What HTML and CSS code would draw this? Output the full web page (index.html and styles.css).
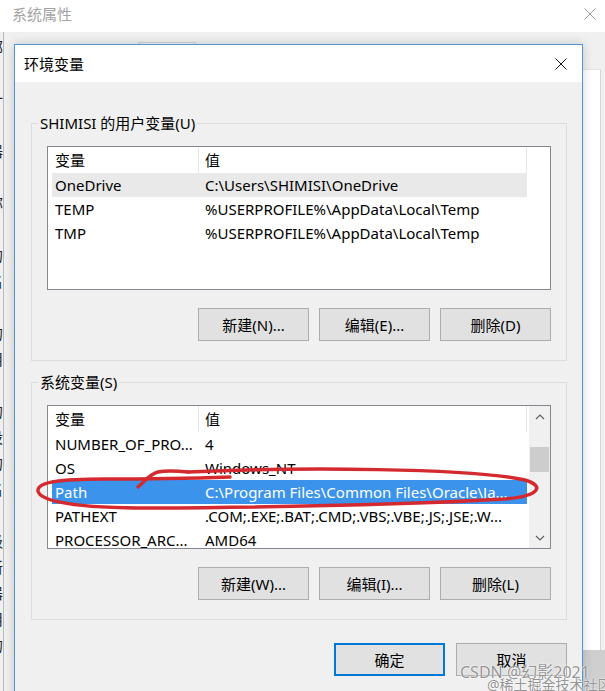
FILE: index.html
```html
<!DOCTYPE html>
<html lang="zh-CN">
<head>
<meta charset="utf-8">
<title>环境变量</title>
<link rel="stylesheet" href="styles.css">
</head>
<body>
<div class="bgwin">
  <div class="bg-titlebar">
    <span class="bg-title">系统属性</span>
    <svg class="bg-close" width="12" height="12" viewBox="0 0 12 12"><path d="M0.5 0.5L11.5 11.5M11.5 0.5L0.5 11.5" stroke="#9a9a9a" stroke-width="1" fill="none"/></svg>
  </div>
  <div class="bg-body">
    <div class="bg-left">
      <div class="bg-left-text">部<br>\<br>计<br>s<br>器<br>d<br>称<br>\<br>的<br>名<br>s<br>的<br>用<br>、<br>的<br>设<br>的<br>名<br>s<br>级<br>新<br>器<br>用<br>的<br>s</div>
    </div>
    <div class="bg-mid"><div class="bg-tab"></div></div>
    <div class="bg-right">
      <div class="bg-panel"></div>
      <div class="bg-bottom"></div>
    </div>
  </div>
</div>

<div class="dialog">
  <div class="dlg-titlebar">
    <span class="dlg-title">环境变量</span>
    <svg class="dlg-close" width="12" height="12" viewBox="0 0 12 12"><path d="M0.5 0.5L11.5 11.5M11.5 0.5L0.5 11.5" stroke="#111" stroke-width="1" fill="none"/></svg>
  </div>
  <div class="dlg-body">
    <fieldset class="group">
      <legend>SHIMISI 的用户变量(U)</legend>
      <div class="listview">
        <div class="lv-rows">
          <div class="lv-header"><span class="c1">变量</span><span class="c2">值</span></div>
          <div class="lv-row sel-grey"><span class="c1">OneDrive</span><span class="c2">C:\Users\SHIMISI\OneDrive</span></div>
          <div class="lv-row"><span class="c1">TEMP</span><span class="c2">%USERPROFILE%\AppData\Local\Temp</span></div>
          <div class="lv-row"><span class="c1">TMP</span><span class="c2">%USERPROFILE%\AppData\Local\Temp</span></div>
        </div>
      </div>
      <div class="btnrow">
        <button class="btn">新建(N)...</button>
        <button class="btn">编辑(E)...</button>
        <button class="btn">删除(D)</button>
      </div>
    </fieldset>

    <fieldset class="group group-sys">
      <legend>系统变量(S)</legend>
      <div class="listview">
        <div class="lv-rows">
          <div class="lv-header"><span class="c1">变量</span><span class="c2">值</span></div>
          <div class="lv-row"><span class="c1">NUMBER_OF_PRO...</span><span class="c2">4</span></div>
          <div class="lv-row"><span class="c1">OS</span><span class="c2">Windows_NT</span></div>
          <div class="lv-row sel-blue"><span class="c1">Path</span><span class="c2">C:\Program Files\Common Files\Oracle\Ja...</span></div>
          <div class="lv-row"><span class="c1">PATHEXT</span><span class="c2">.COM;.EXE;.BAT;.CMD;.VBS;.VBE;.JS;.JSE;.W...</span></div>
          <div class="lv-row"><span class="c1">PROCESSOR_ARC...</span><span class="c2">AMD64</span></div>
        </div>
        <div class="scrollbar">
          <div class="sb-btn"><svg width="10" height="8" viewBox="0 0 10 8"><polyline points="1,6 5,2 9,6" fill="none" stroke="#606060" stroke-width="1.2"/></svg></div>
          <div class="sb-track"><div class="sb-thumb"></div></div>
          <div class="sb-btn"><svg width="10" height="8" viewBox="0 0 10 8"><polyline points="1,2 5,6 9,2" fill="none" stroke="#606060" stroke-width="1.2"/></svg></div>
        </div>
      </div>
      <div class="btnrow">
        <button class="btn">新建(W)...</button>
        <button class="btn">编辑(I)...</button>
        <button class="btn">删除(L)</button>
      </div>
    </fieldset>

    <div class="footer">
      <button class="btn btn-default">确定</button>
      <button class="btn">取消</button>
    </div>
  </div>
</div>

<svg class="annotation" width="605" height="691" viewBox="0 0 605 691">
  <path d="M188 472 C 300 467, 470 468, 525 480 C 545 486, 540 496, 505 499 C 420 504, 300 507, 150 508 C 80 508, 40 502, 38 491 C 37 482, 60 479, 105 479 C 160 479, 200 478, 230 477" fill="none" stroke="#d42a2f" stroke-width="3.5" stroke-linecap="round"/>
  <path d="M138 487 C 145 481, 150 474, 158 472 C 168 470, 178 471, 188 472" fill="none" stroke="#d42a2f" stroke-width="3.5" stroke-linecap="round"/>
</svg>

<div class="wm wm-csdn">CSDN @幻影2021</div>
<div class="wm wm-xitu">@稀土掘金技术社区</div>
</body>
</html>
```

FILE: styles.css
```css
* { box-sizing: border-box; }
html, body { margin: 0; padding: 0; }
body {
  width: 605px;
  height: 691px;
  overflow: hidden;
  position: relative;
  background: #f0f0f0;
  font-family: "Noto Sans", "Noto Sans CJK SC", sans-serif;
  font-size: 15px;
  line-height: 20px;
  color: #000;
}

/* background window (系统属性) */
.bgwin { width: 605px; height: 691px; display: flex; flex-direction: column; }
.bg-titlebar {
  height: 32px;
  flex: none;
  background: #fff;
  display: flex;
  align-items: flex-start;
  justify-content: space-between;
  padding: 4px 9px 0 12px;
}
.bg-title { color: #a3a3a3; font-family: "Noto Sans CJK SC", sans-serif; }
.bg-close { margin-top: 4px; }
.bg-body { flex: 1; display: flex; }
.bg-left { width: 4px; border-right: 1px solid #b9b9b9; overflow: hidden; }
.bg-left-text {
  margin-left: -12px;
  width: 15px;
  padding-top: 2px;
  font-family: "Noto Sans CJK SC", sans-serif;
  line-height: 26px;
  color: #222;
}
.bg-mid { flex: 1; }
.bg-tab { margin: 10px 0 0 134px; width: 58px; height: 20px; border: 1px solid #d5d5d5; background: #f0f0f0; }
.bg-right { width: 22px; display: flex; flex-direction: column; }
.bg-panel { margin-top: 37px; height: 581px; width: 18px; background: #fff; border-right: 1px solid #d5d5d5; border-top: 1px solid #e3e3e3; }
.bg-bottom { flex: 1; background: #cfcfcf; }

/* dialog (环境变量) */
.dialog {
  position: absolute;
  left: 14px;
  top: 44px;
  width: 569px;
  height: 680px;
  border: 1px solid #4f96d8;
  background: #f0f0f0;
  box-shadow: 0 0 10px rgba(0, 0, 0, 0.18);
  display: flex;
  flex-direction: column;
}
.dlg-titlebar {
  height: 37px;
  flex: none;
  background: #fff;
  display: flex;
  align-items: center;
  justify-content: space-between;
  padding: 0 15px 0 9px;
}
.dlg-title { font-family: "Noto Sans CJK SC", sans-serif; }
.dlg-body { padding: 31px 15px 0 16px; }

.group {
  margin: 0;
  min-width: 0;
  border: 1px solid #dcdcdc;
  padding: 13px 15px 19px 15px;
}
.group legend {
  padding: 0 2px;
  margin-left: -9px;
  line-height: 20px;
}
.group-sys { margin-top: 11px; }

.listview {
  height: 144px;
  border: 1px solid #828790;
  background: #fff;
  display: flex;
}
.lv-rows { flex: 1; padding-left: 4px; overflow: hidden; }
.lv-header, .lv-row { display: flex; width: 475px; white-space: nowrap; }
.lv-header { height: 26px; }
.lv-row { height: 24px; align-items: center; }
.c1 { width: 147px; padding-left: 3px; overflow: hidden; flex: none; }
.c2 { width: 328px; padding-left: 6px; overflow: hidden; flex: none; }
.lv-header .c1, .lv-header .c2 {
  display: flex;
  align-items: center;
  border-right: 1px solid #e5e5e5;
  font-family: "Noto Sans CJK SC", sans-serif;
}
.sel-grey { background: #e9e9e9; }
.sel-blue { background: #3b93ec; color: #fff; }

.scrollbar { width: 21px; flex: none; background: #f0f0f0; display: flex; flex-direction: column; }
.sb-btn { height: 21px; display: flex; align-items: center; justify-content: center; }
.sb-track { flex: 1; padding-top: 20px; }
.sb-thumb { height: 25px; margin: 0 1px; background: #cdcdcd; }

.btnrow { display: flex; justify-content: flex-end; gap: 10px; margin-top: 18px; }
.btn {
  width: 111px;
  height: 33px;
  padding: 0;
  border: 1px solid #adadad;
  background: #e1e1e1;
  font-family: "Noto Sans", "Noto Sans CJK SC", sans-serif;
  font-size: 15px;
  color: #000;
}
.btn-default { border: 2px solid #0078d7; }
.footer { display: flex; justify-content: flex-end; gap: 11px; margin-top: 23px; }

/* overlays */
.annotation { position: absolute; left: 0; top: 0; pointer-events: none; }
.wm {
  position: absolute;
  white-space: nowrap;
  color: rgba(120, 120, 120, 0.8);
  text-shadow: 0 0 1px #fff, 0 0 2px #fff;
  font-family: "Noto Sans", "Noto Sans CJK SC", sans-serif;
}
.wm-csdn { left: 460px; top: 662px; font-size: 16px; }
.wm-xitu { left: 487px; top: 675px; font-size: 14px; }
```
